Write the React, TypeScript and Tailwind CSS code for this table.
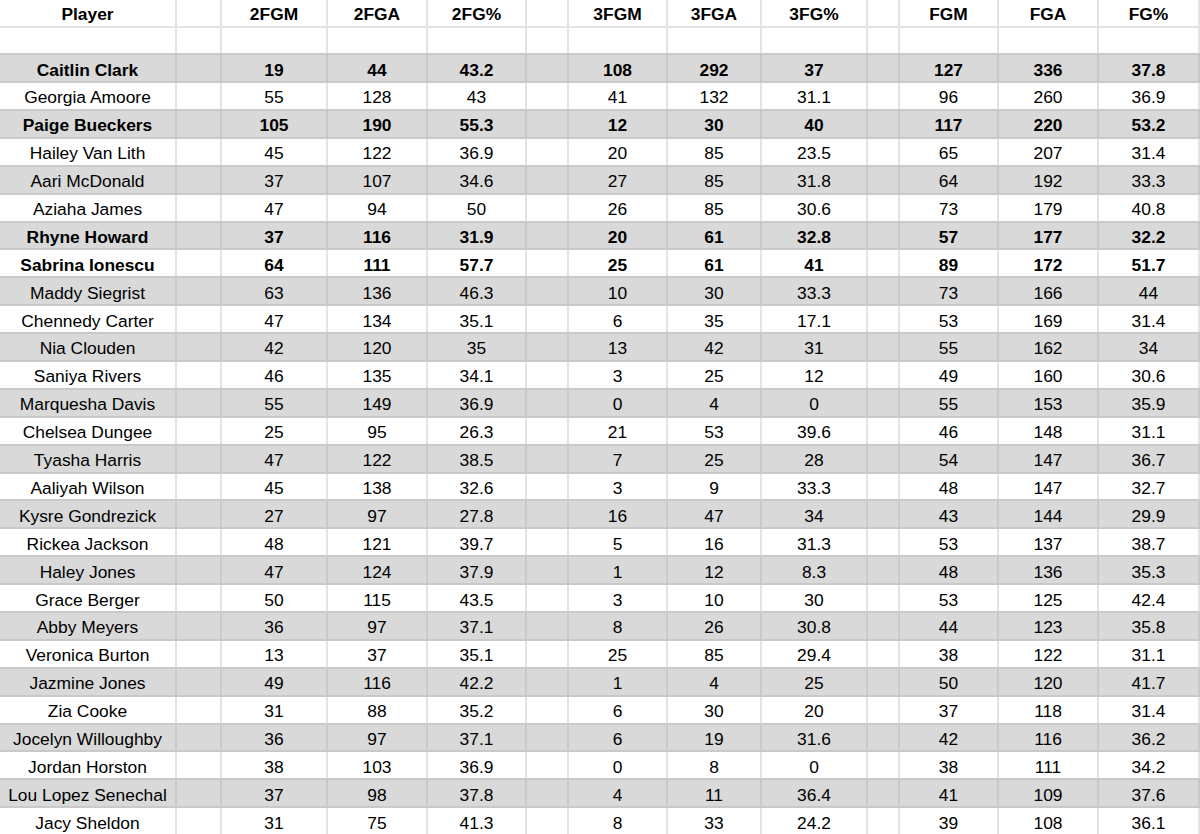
import React from 'react';

type Row = {
  name: string;
  stats: (number | string)[];
  bold?: boolean;
};

// column widths incl. right border, spacer columns are empty
const widths = [177, 45, 106, 100, 99, 42, 99, 94, 106, 32, 99, 100, 101];
const headers = ['Player', '', '2FGM', '2FGA', '2FG%', '', '3FGM', '3FGA', '3FG%', '', 'FGM', 'FGA', 'FG%'];

const rows: Row[] = [
  { name: 'Caitlin Clark', stats: [19, 44, 43.2, 108, 292, 37, 127, 336, 37.8], bold: true },
  { name: 'Georgia Amoore', stats: [55, 128, 43, 41, 132, 31.1, 96, 260, 36.9] },
  { name: 'Paige Bueckers', stats: [105, 190, 55.3, 12, 30, 40, 117, 220, 53.2], bold: true },
  { name: 'Hailey Van Lith', stats: [45, 122, 36.9, 20, 85, 23.5, 65, 207, 31.4] },
  { name: 'Aari McDonald', stats: [37, 107, 34.6, 27, 85, 31.8, 64, 192, 33.3] },
  { name: 'Aziaha James', stats: [47, 94, 50, 26, 85, 30.6, 73, 179, 40.8] },
  { name: 'Rhyne Howard', stats: [37, 116, 31.9, 20, 61, 32.8, 57, 177, 32.2], bold: true },
  { name: 'Sabrina Ionescu', stats: [64, 111, 57.7, 25, 61, 41, 89, 172, 51.7], bold: true },
  { name: 'Maddy Siegrist', stats: [63, 136, 46.3, 10, 30, 33.3, 73, 166, 44] },
  { name: 'Chennedy Carter', stats: [47, 134, 35.1, 6, 35, 17.1, 53, 169, 31.4] },
  { name: 'Nia Clouden', stats: [42, 120, 35, 13, 42, 31, 55, 162, 34] },
  { name: 'Saniya Rivers', stats: [46, 135, 34.1, 3, 25, 12, 49, 160, 30.6] },
  { name: 'Marquesha Davis', stats: [55, 149, 36.9, 0, 4, 0, 55, 153, 35.9] },
  { name: 'Chelsea Dungee', stats: [25, 95, 26.3, 21, 53, 39.6, 46, 148, 31.1] },
  { name: 'Tyasha Harris', stats: [47, 122, 38.5, 7, 25, 28, 54, 147, 36.7] },
  { name: 'Aaliyah Wilson', stats: [45, 138, 32.6, 3, 9, 33.3, 48, 147, 32.7] },
  { name: 'Kysre Gondrezick', stats: [27, 97, 27.8, 16, 47, 34, 43, 144, 29.9] },
  { name: 'Rickea Jackson', stats: [48, 121, 39.7, 5, 16, 31.3, 53, 137, 38.7] },
  { name: 'Haley Jones', stats: [47, 124, 37.9, 1, 12, 8.3, 48, 136, 35.3] },
  { name: 'Grace Berger', stats: [50, 115, 43.5, 3, 10, 30, 53, 125, 42.4] },
  { name: 'Abby Meyers', stats: [36, 97, 37.1, 8, 26, 30.8, 44, 123, 35.8] },
  { name: 'Veronica Burton', stats: [13, 37, 35.1, 25, 85, 29.4, 38, 122, 31.1] },
  { name: 'Jazmine Jones', stats: [49, 116, 42.2, 1, 4, 25, 50, 120, 41.7] },
  { name: 'Zia Cooke', stats: [31, 88, 35.2, 6, 30, 20, 37, 118, 31.4] },
  { name: 'Jocelyn Willoughby', stats: [36, 97, 37.1, 6, 19, 31.6, 42, 116, 36.2] },
  { name: 'Jordan Horston', stats: [38, 103, 36.9, 0, 8, 0, 38, 111, 34.2] },
  { name: 'Lou Lopez Senechal', stats: [37, 98, 37.8, 4, 11, 36.4, 41, 109, 37.6] },
  { name: 'Jacy Sheldon', stats: [31, 75, 41.3, 8, 33, 24.2, 39, 108, 36.1] },
];

// spread stats into the 13 grid columns (spacers at 1, 5, 9)
const toCells = (r: Row) => {
  const s = r.stats;
  return [r.name, '', s[0], s[1], s[2], '', s[3], s[4], s[5], '', s[6], s[7], s[8]];
};

const Cell = ({ w, dark, children }: { w: number; dark: boolean; children?: React.ReactNode }) => (
  <div
    className={`shrink-0 h-full flex items-center justify-center pt-[3px] border-r-2 whitespace-nowrap ${
      dark ? 'border-[#c9c9c9]' : 'border-[#e3e3e3]'
    }`}
    style={{ width: w }}
  >
    {children}
  </div>
);

export default function App() {
  return (
    <div className="w-[1200px] h-[834px] overflow-hidden bg-white text-black text-[17.4px] font-['Liberation_Sans',Arial,sans-serif]">
      {/* header */}
      <div className="flex h-[27.6px] border-b-2 border-[#e3e3e3] font-bold">
        {headers.map((h, i) => (
          <Cell key={i} w={widths[i]} dark={false}>
            {h}
          </Cell>
        ))}
      </div>

      {/* empty row */}
      <div className="flex h-[27.6px] border-b-2 border-[#c9c9c9]">
        {widths.map((w, i) => (
          <Cell key={i} w={w} dark={false} />
        ))}
      </div>

      {rows.map((r, ri) => {
        const gray = ri % 2 === 0;
        return (
          <div
            key={r.name}
            className={`flex h-[27.9px] border-b-2 border-[#c9c9c9] ${gray ? 'bg-[#d9d9d9]' : 'bg-white'} ${
              r.bold ? 'font-bold' : ''
            }`}
          >
            {toCells(r).map((c, i) => (
              <Cell key={i} w={widths[i]} dark={gray}>
                {c}
              </Cell>
            ))}
          </div>
        );
      })}
    </div>
  );
}
